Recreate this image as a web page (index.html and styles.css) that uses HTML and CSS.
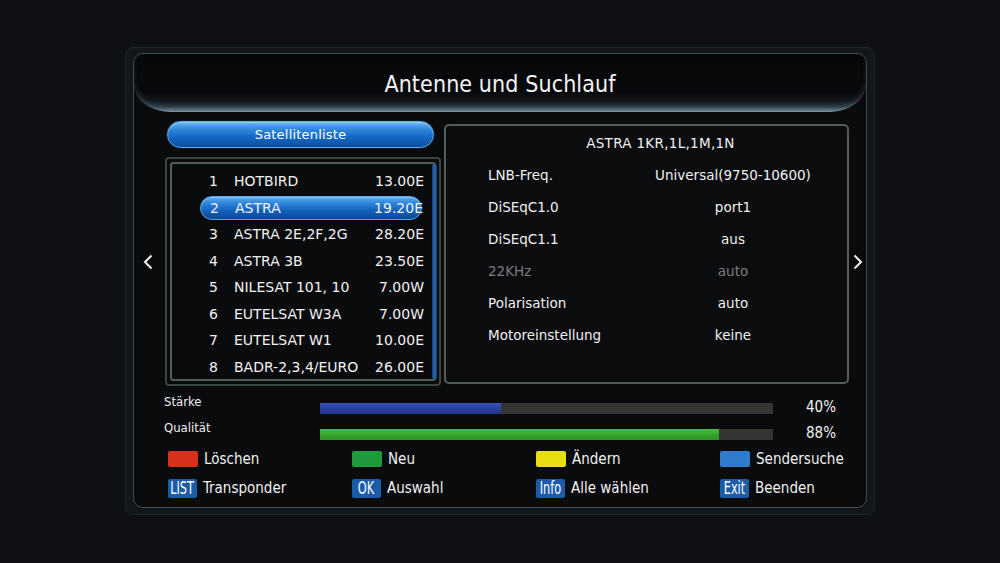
FILE: index.html
```html
<!DOCTYPE html>
<html lang="de">
<head>
<meta charset="utf-8">
<title>Antenne und Suchlauf</title>
<link rel="stylesheet" href="styles.css">
</head>
<body>
<div class="screen">
  <div class="frame">
    <div class="panel">
      <div class="header"><h1 class="title">Antenne und Suchlauf</h1></div>

      <div class="main">
        <div class="nav nav-left">
          <svg width="10" height="16" viewBox="0 0 10 16"><polyline points="8.5,1.5 2,8 8.5,14.5" fill="none" stroke="#f4f4f4" stroke-width="2"/></svg>
        </div>

        <div class="left-col">
          <div class="tab">Satellitenliste</div>
          <div class="list-outer">
            <div class="list-inner">
              <ul class="sat-list">
                <li class="sat"><span class="num">1</span><span class="name">HOTBIRD</span><span class="pos">13.00E</span></li>
                <li class="sat selected"><span class="num">2</span><span class="name">ASTRA</span><span class="pos">19.20E</span></li>
                <li class="sat"><span class="num">3</span><span class="name">ASTRA 2E,2F,2G</span><span class="pos">28.20E</span></li>
                <li class="sat"><span class="num">4</span><span class="name">ASTRA 3B</span><span class="pos">23.50E</span></li>
                <li class="sat"><span class="num">5</span><span class="name">NILESAT 101, 10</span><span class="pos">7.00W</span></li>
                <li class="sat"><span class="num">6</span><span class="name">EUTELSAT W3A</span><span class="pos">7.00W</span></li>
                <li class="sat"><span class="num">7</span><span class="name">EUTELSAT W1</span><span class="pos">10.00E</span></li>
                <li class="sat"><span class="num">8</span><span class="name">BADR-2,3,4/EURO</span><span class="pos">26.00E</span></li>
              </ul>
              <div class="scrollbar"></div>
            </div>
          </div>
        </div>

        <div class="detail">
          <div class="detail-title">ASTRA 1KR,1L,1M,1N</div>
          <div class="detail-rows">
            <div class="drow"><span class="dlabel">LNB-Freq.</span><span class="dvalue">Universal(9750-10600)</span></div>
            <div class="drow"><span class="dlabel">DiSEqC1.0</span><span class="dvalue">port1</span></div>
            <div class="drow"><span class="dlabel">DiSEqC1.1</span><span class="dvalue">aus</span></div>
            <div class="drow disabled"><span class="dlabel">22KHz</span><span class="dvalue">auto</span></div>
            <div class="drow"><span class="dlabel">Polarisation</span><span class="dvalue">auto</span></div>
            <div class="drow"><span class="dlabel">Motoreinstellung</span><span class="dvalue">keine</span></div>
          </div>
        </div>

        <div class="nav nav-right">
          <svg width="10" height="16" viewBox="0 0 10 16"><polyline points="1.5,1.5 8,8 1.5,14.5" fill="none" stroke="#f4f4f4" stroke-width="2"/></svg>
        </div>
      </div>

      <div class="signal">
        <div class="sig-row">
          <span class="sig-label">Stärke</span>
          <div class="bar"><div class="fill fill-blue" style="width:40%"></div></div>
          <span class="sig-pct">40%</span>
        </div>
        <div class="sig-row">
          <span class="sig-label">Qualität</span>
          <div class="bar"><div class="fill fill-green" style="width:88%"></div></div>
          <span class="sig-pct">88%</span>
        </div>
      </div>

      <div class="legend">
        <div class="leg-row">
          <div class="leg-item"><span class="swatch red"></span><span class="leg-text">Löschen</span></div>
          <div class="leg-item"><span class="swatch green"></span><span class="leg-text">Neu</span></div>
          <div class="leg-item"><span class="swatch yellow"></span><span class="leg-text">Ändern</span></div>
          <div class="leg-item"><span class="swatch blue"></span><span class="leg-text">Sendersuche</span></div>
        </div>
        <div class="leg-row">
          <div class="leg-item"><span class="key"><span class="key-text">LIST</span></span><span class="leg-text">Transponder</span></div>
          <div class="leg-item"><span class="key"><span class="key-text">OK</span></span><span class="leg-text">Auswahl</span></div>
          <div class="leg-item"><span class="key"><span class="key-text">Info</span></span><span class="leg-text">Alle wählen</span></div>
          <div class="leg-item"><span class="key"><span class="key-text">Exit</span></span><span class="leg-text">Beenden</span></div>
        </div>
      </div>
    </div>
  </div>
</div>
</body>
</html>
```

FILE: styles.css
```css
* { box-sizing: border-box; }

html, body {
  margin: 0;
  padding: 0;
  background: #0f1014;
}

body {
  width: 1000px;
  height: 563px;
  overflow: hidden;
  font-family: "DejaVu Sans", "Liberation Sans", sans-serif;
  color: #f0f0f0;
}

.screen {
  padding: 47px 0 0 125px;
}

.frame {
  width: 750px;
  border: 1px solid #1d2629;
  border-radius: 8px;
  background: #11171a;
  padding: 5px 7px 6px 7px;
}

.panel {
  border: 1px solid #3a4a50;
  border-radius: 10px;
  background: #0a0b0d;
  padding-bottom: 8px;
  overflow: hidden;
}

/* header */
.header {
  height: 58px;
  border-radius: 9px 9px 36px 36px / 9px 9px 28px 28px;
  background: linear-gradient(to bottom, #060708 0%, #08090b 64%, #10151a 80%, #26323a 90%, #55697a 97%, #7e96a4 100%);
  box-shadow: inset 0 -4px 7px -3px rgba(130, 158, 174, 0.5);
  display: flex;
  align-items: center;
  justify-content: center;
  padding-top: 2px;
}

.title {
  margin: 0;
  font-family: "DejaVu Sans Condensed", "DejaVu Sans", sans-serif;
  font-stretch: condensed;
  font-weight: normal;
  font-size: 23px;
  color: #f4f4f4;
  letter-spacing: 0.1px;
}

/* main area */
.main {
  display: flex;
  margin-top: 9px;
  height: 265px;
}

.nav {
  display: flex;
  align-items: flex-start;
}

.nav svg { display: block; margin-top: 133px; }

.nav-left { width: 31px; padding-left: 9px; }
.nav-right { width: 17px; padding-left: 4px; }

.left-col {
  width: 276px;
  display: flex;
  flex-direction: column;
  margin-right: 3px;
}

.tab {
  height: 27px;
  margin: 0 7px 0 2px;
  border-radius: 14px;
  border: 1px solid #5fa9e6;
  background: linear-gradient(to bottom, #6bb6f2 0%, #2f86dc 30%, #1566c2 62%, #0d4f9f 100%);
  box-shadow: inset 0 1px 1px rgba(255,255,255,0.35), 0 0 2px rgba(40,120,210,0.5);
  display: flex;
  align-items: center;
  justify-content: center;
  font-size: 13px;
  color: #ffffff;
  letter-spacing: 0.2px;
}

.list-outer {
  margin-top: 9px;
  height: 229px;
  border: 2px solid #3b4544;
  border-radius: 4px;
  padding: 3px;
}

.list-inner {
  height: 100%;
  border: 2px solid #525c5a;
  border-radius: 3px;
  display: flex;
}

.sat-list {
  list-style: none;
  margin: 0;
  padding: 5px 0 0 0;
  flex: 1;
}

.sat {
  display: flex;
  align-items: center;
  height: 24px;
  width: 222px;
  margin: 0 0 2.5px 28px;
  font-size: 14px;
  color: #f2f2f2;
  white-space: nowrap;
}

.sat.selected {
  border-radius: 12px;
  border: 1px solid #5aa4e4;
  background: linear-gradient(to bottom, #5eacef 0%, #2a80d6 32%, #135fb9 65%, #0b4791 100%);
  box-shadow: inset 0 1px 1px rgba(255,255,255,0.3);
}

.num {
  width: 18px;
  text-align: right;
}

.name {
  margin-left: 16px;
}

.pos {
  margin-left: auto;
  margin-right: -2px;
}

.scrollbar {
  width: 5px;
  margin: 0 -3px 0 0;
  border-radius: 2px;
  background: linear-gradient(to right, #173f78, #2a66b0, #173f78);
}

/* detail panel */
.detail {
  width: 405px;
  height: 260px;
  margin-top: 3px;
  border: 2px solid #545d5b;
  border-radius: 5px;
  padding-top: 4px;
  background: #0b0c0e;
}

.detail-title {
  height: 26px;
  line-height: 26px;
  text-align: center;
  padding-left: 28px;
  font-size: 13.5px;
  letter-spacing: 0.3px;
  color: #f0f0f0;
}

.detail-rows {
  margin-top: 3px;
}

.drow {
  display: grid;
  grid-template-columns: 187px 200px;
  height: 32px;
  align-items: center;
  font-size: 13.5px;
  color: #f0f0f0;
}

.dlabel { padding-left: 42px; }
.dvalue { text-align: center; }

.drow.disabled { color: #7c7c7c; }

/* signal bars */
.signal {
  padding: 8px 0 0 30px;
}

.sig-row {
  display: grid;
  grid-template-columns: 156px 453px 63px;
  height: 26px;
  align-items: start;
}

.sig-label {
  font-family: "DejaVu Sans Condensed", "DejaVu Sans", sans-serif;
  font-stretch: condensed;
  font-size: 13px;
  line-height: 14px;
  margin-top: 1px;
  color: #eeeeee;
}

.bar {
  margin-top: 9px;
  height: 11px;
  background: #333533;
}

.fill { height: 100%; }

.fill-blue {
  background: linear-gradient(to bottom, #3a52b6 0%, #2a3ea0 50%, #22358c 100%);
}

.fill-green {
  background: linear-gradient(to bottom, #4cbc3e 0%, #36a52c 50%, #2c9224 100%);
}

.sig-pct {
  text-align: right;
  font-family: "DejaVu Sans Condensed", "DejaVu Sans", sans-serif;
  font-stretch: condensed;
  font-size: 15px;
  line-height: 16px;
  margin-top: 5px;
  color: #f0f0f0;
}

/* legend */
.legend {
  margin-top: 2px;
  padding-left: 34px;
}

.leg-row {
  display: grid;
  grid-template-columns: repeat(4, 184px);
  height: 22px;
}

.leg-row + .leg-row { margin-top: 7px; }

.leg-item {
  display: flex;
  align-items: center;
}

.swatch {
  width: 30px;
  height: 16px;
  border-radius: 2px;
}

.swatch.red { background: #d8321f; }
.swatch.green { background: #1f9a3c; }
.swatch.yellow { background: #e8de12; }
.swatch.blue { background: #2f7ccd; }

.key {
  width: 29px;
  height: 19px;
  border-radius: 2px;
  background: #1b5ca9;
  color: #ffffff;
  display: flex;
  align-items: center;
  justify-content: center;
  overflow: hidden;
}

.key-text {
  display: inline-block;
  font-family: "DejaVu Sans Condensed", "DejaVu Sans", sans-serif;
  font-stretch: condensed;
  font-size: 17px;
  line-height: 19px;
  white-space: nowrap;
  transform: scaleX(0.74);
}

.leg-text {
  margin-left: 6px;
  font-family: "DejaVu Sans Condensed", "DejaVu Sans", sans-serif;
  font-stretch: condensed;
  font-size: 15px;
  color: #f0f0f0;
}
```
